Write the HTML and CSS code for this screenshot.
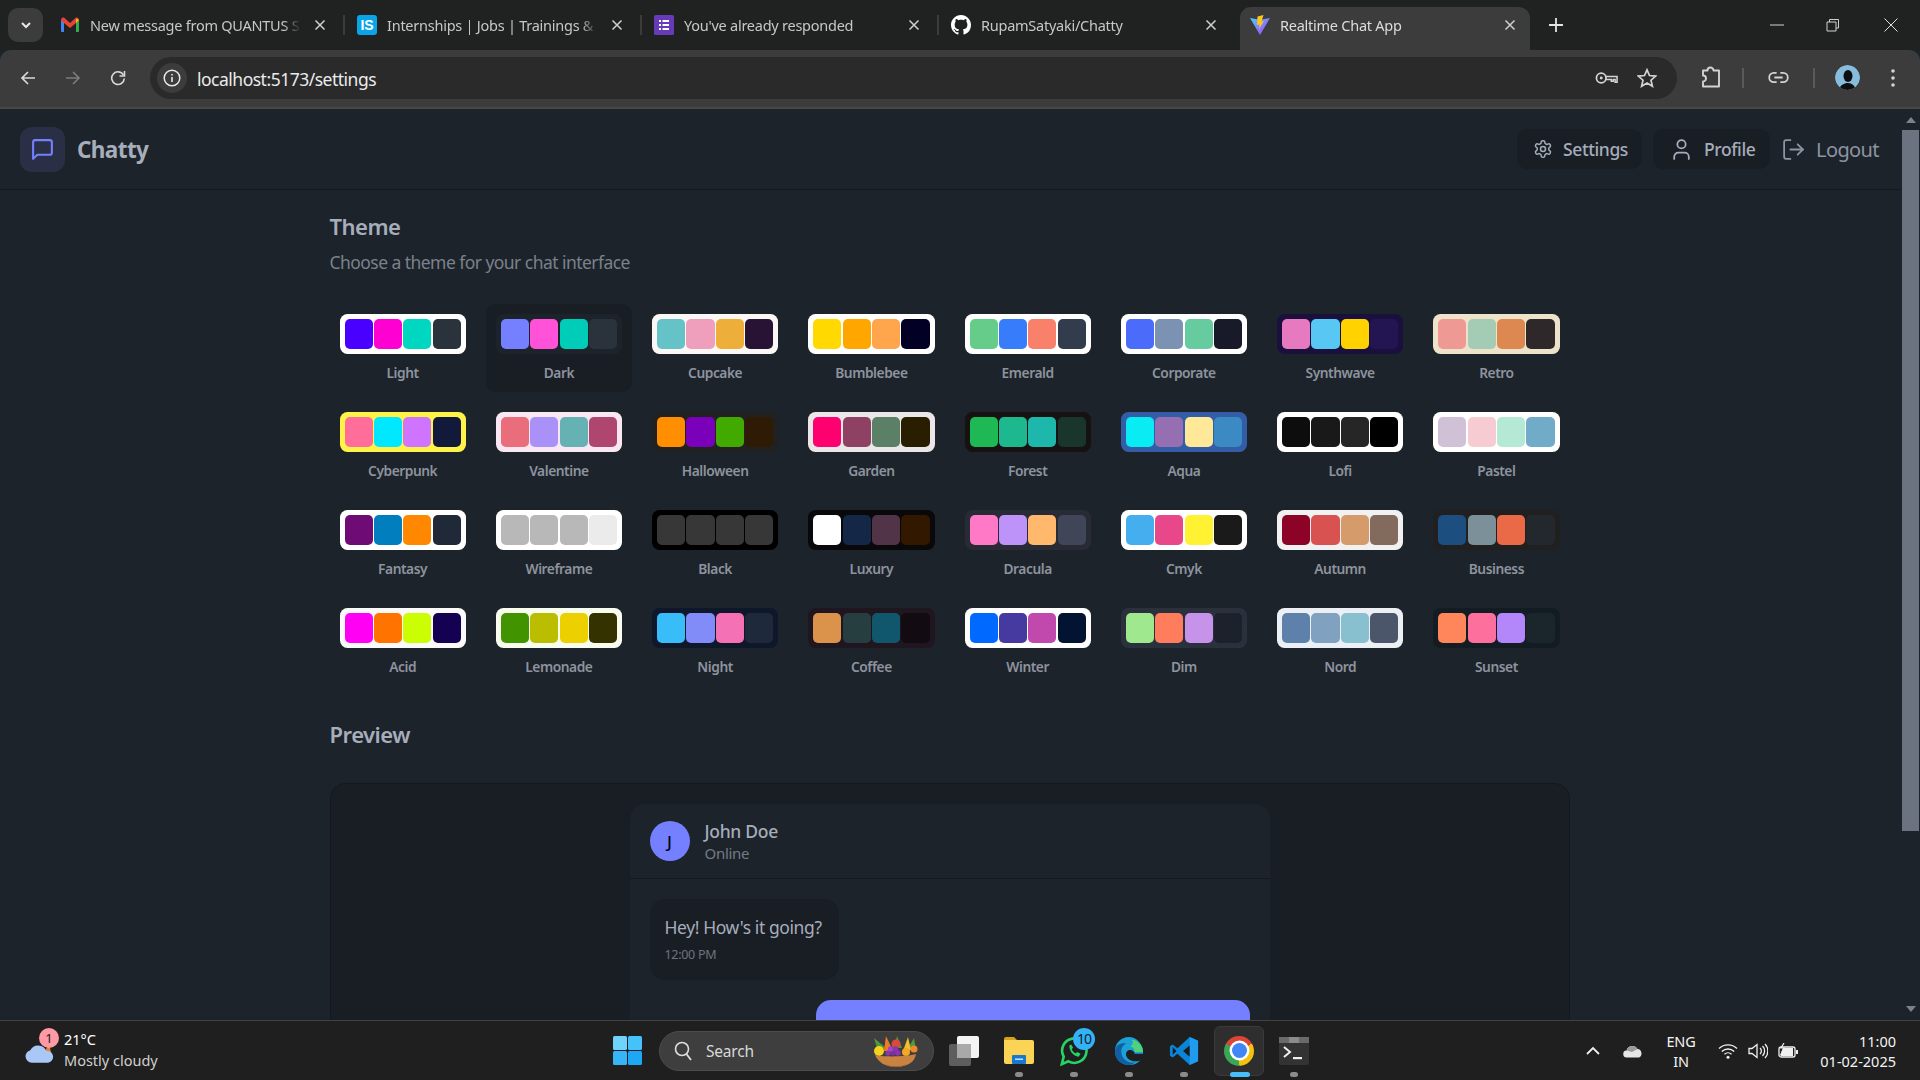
FILE: index.html
```html
<!DOCTYPE html>
<html lang="en">
<head>
<meta charset="utf-8">
<title>Realtime Chat App</title>
<link rel="stylesheet" href="styles.css">
</head>
<body>
<div class="window">
  <header class="tabstrip">
    <button class="tabsearch"><svg class="i12" viewBox="0 0 12 12"><path d="M2 4l4 4 4-4" fill="none" stroke="#e8e8e8" stroke-width="2"/></svg></button>
    <div class="tab first">
      <svg class="fav" viewBox="0 0 20 20"><path d="M1 17V5l3 1v11H2a1 1 0 0 1-1-1z" fill="#4285f4"/><path d="M16 17V6l3-1v11a1 1 0 0 1-1 1z" fill="#34a853"/><path d="M1 5c0-2 2-3 3.500-2L10 8l5.500-5C17 2 19 3 19 5l-3 3-6 5-6-5z" fill="#ea4335"/><path d="M16 3.500l3 1.500-3 3z" fill="#fbbc04"/></svg>
      <span class="tabtitle">New message from QUANTUS S</span>
      <svg class="tabx" viewBox="0 0 12 12"><path d="M1.500 1.500l9 9M10.500 1.500l-9 9"/></svg>
    </div>
    <div class="tab">
      <span class="fav isfav">IS</span>
      <span class="tabtitle">Internships | Jobs | Trainings &amp;</span>
      <svg class="tabx" viewBox="0 0 12 12"><path d="M1.500 1.500l9 9M10.500 1.500l-9 9"/></svg>
    </div>
    <div class="tab">
      <svg class="fav" viewBox="0 0 20 20"><rect width="20" height="20" rx="1.500" fill="#673ab7"/><path d="M5 5h2v2H5zM8.500 5H15v2H8.500zM5 9h2v2H5zM8.500 9H15v2H8.500zM5 13h2v2H5zM8.500 13H15v2H8.500z" fill="#fff"/></svg>
      <span class="tabtitle">You've already responded</span>
      <svg class="tabx" viewBox="0 0 12 12"><path d="M1.500 1.500l9 9M10.500 1.500l-9 9"/></svg>
    </div>
    <div class="tab last">
      <svg class="fav" viewBox="0 0 16 16"><path fill="#fff" d="M8 0C3.580 0 0 3.580 0 8c0 3.540 2.290 6.530 5.470 7.590.4.070.55-.17.55-.38 0-.19-.01-.82-.01-1.490-2.010.37-2.530-.49-2.690-.94-.09-.23-.48-.94-.82-1.130-.28-.15-.68-.52-.01-.53.63-.01 1.080.58 1.230.82.72 1.210 1.870.87 2.330.66.07-.52.28-.87.51-1.070-1.780-.2-3.640-.89-3.640-3.950 0-.87.31-1.590.82-2.150-.08-.2-.36-1.020.08-2.120 0 0 .67-.21 2.200.82.64-.18 1.320-.27 2-.27.68 0 1.360.09 2 .27 1.530-1.040 2.200-.82 2.200-.82.44 1.100.16 1.920.08 2.120.51.56.82 1.270.82 2.150 0 3.070-1.870 3.750-3.650 3.950.29.25.54.73.54 1.480 0 1.070-.01 1.930-.01 2.200 0 .21.15.46.55.38A8.013 8.013 0 0 0 16 8c0-4.420-3.580-8-8-8z"/></svg>
      <span class="tabtitle">RupamSatyaki/Chatty</span>
      <svg class="tabx" viewBox="0 0 12 12"><path d="M1.500 1.500l9 9M10.500 1.500l-9 9"/></svg>
    </div>
    <div class="tab active">
      <svg class="fav" viewBox="0 0 20 20"><defs><linearGradient id="vg" x1="0" y1="0" x2="1" y2="1"><stop offset="0" stop-color="#41d1ff"/><stop offset="1" stop-color="#bd34fe"/></linearGradient></defs><path d="M0 3l10 1.800L20 3 10 20z" fill="url(#vg)"/><path d="M13.500 0L7.500 1.500 7 10l2.500-.5-.5 4.500 5-8-2.500.5z" fill="#ffc517"/></svg>
      <span class="tabtitle">Realtime Chat App</span>
      <svg class="tabx" viewBox="0 0 12 12"><path d="M1.500 1.500l9 9M10.500 1.500l-9 9"/></svg>
    </div>
    <svg class="newtab" viewBox="0 0 14 14"><path d="M7 0v14M0 7h14" stroke="#e3e3e3" stroke-width="1.800" fill="none"/></svg>
    <div class="winctl">
      <svg viewBox="0 0 14 14"><path d="M0 7h14" stroke="#d0d0d0" stroke-width="1" fill="none"/></svg>
      <svg viewBox="0 0 14 14"><path d="M1 4h9v9H1zM3.500 4V1.500h9V10H10" stroke="#d0d0d0" stroke-width="1" fill="none"/></svg>
      <svg class="winclose" viewBox="0 0 14 14"><path d="M.5.500l13 13M13.500.500l-13 13" stroke="#e0e0e0" stroke-width="1" fill="none"/></svg>
    </div>
  </header>

  <nav class="toolbar">
    <span class="navbtn"><svg viewBox="0 0 16 16"><path d="M15 8H2M8 2L2 8l6 6" fill="none" stroke="#d8d8d8" stroke-width="1.700"/></svg></span>
    <span class="navbtn"><svg viewBox="0 0 16 16"><path d="M1 8h13M8 2l6 6-6 6" fill="none" stroke="#7b7b7b" stroke-width="1.700"/></svg></span>
    <span class="navbtn"><svg viewBox="0 0 16 16"><path d="M13.500 5A6.300 6.300 0 1 0 14.300 8.500" fill="none" stroke="#d8d8d8" stroke-width="1.600"/><path d="M14.500 1v5h-5" fill="none" stroke="#d8d8d8" stroke-width="1.600"/></svg></span>
    <div class="omnibox">
      <span class="infochip"><svg viewBox="0 0 18 18"><circle cx="9" cy="9" r="7.800" fill="none" stroke="#e8e8e8" stroke-width="1.500"/><path d="M8.200 8h1.600v5H8.200zM8.200 5h1.600v1.600H8.200z" fill="#e8e8e8"/></svg></span>
      <span class="url">localhost:5173/settings</span>
      <svg class="keyicon" viewBox="0 0 24 14"><circle cx="6.500" cy="7" r="5" fill="none" stroke="#d4d4d4" stroke-width="1.800"/><circle cx="6.500" cy="7" r="1.500" fill="#d4d4d4"/><path d="M11.500 5.500H23v6h-2V8.500h-2v2h-2v-2h-5.500" fill="none" stroke="#d4d4d4" stroke-width="1.600"/></svg>
      <svg class="staricon" viewBox="0 0 20 20"><path d="M10 1.800l2.500 5.700 6.200.6-4.700 4.100 1.400 6.100L10 15.100l-5.400 3.200L6 12.200 1.300 8.100l6.200-.6z" fill="none" stroke="#d4d4d4" stroke-width="1.700"/></svg>
    </div>
    <svg class="puzzle" viewBox="0 0 20 24"><path d="M2 4.500h4.500a3 3 0 0 1 6 0H18v16H2v-5a3 3 0 0 0 0-6z" fill="none" stroke="#d4d4d4" stroke-width="1.900" stroke-linejoin="round"/></svg>
    <span class="tbsep"></span>
    <svg class="linkicon" viewBox="0 0 22 14"><path d="M9 2H6a5 5 0 0 0 0 10h3M13 2h3a5 5 0 0 1 0 10h-3M6.500 7h9" fill="none" stroke="#d4d4d4" stroke-width="1.900"/></svg>
    <span class="tbsep sep2"></span>
    <svg class="avatar" viewBox="0 0 25 25"><clipPath id="ac"><circle cx="12.500" cy="12.500" r="12.500"/></clipPath><g clip-path="url(#ac)"><rect width="25" height="25" fill="#86bcdc"/><ellipse cx="13" cy="11" rx="4.500" ry="6" fill="#0c0e10"/><path d="M4 25c1-5 5-7 9-7s7 3 8 7z" fill="#0c0e10"/></g></svg>
    <svg class="dots" viewBox="0 0 4 18"><circle cx="2" cy="2" r="1.800"/><circle cx="2" cy="9" r="1.800"/><circle cx="2" cy="16" r="1.800"/></svg>
  </nav>

  <div class="viewport">
    <div class="page">
      <div class="navbar">
        <div class="brand">
          <span class="logo"><svg viewBox="0 0 24 24"><path d="M21 15a2 2 0 0 1-2 2H7l-4 4V5a2 2 0 0 1 2-2h14a2 2 0 0 1 2 2z"/></svg></span>
          <span class="brandname">Chatty</span>
        </div>
        <div class="navlinks">
          <a class="navbox settingsbox"><svg class="lu s20" viewBox="0 0 24 24"><path d="M12.220 2h-.44a2 2 0 0 0-2 2v.18a2 2 0 0 1-1 1.730l-.43.25a2 2 0 0 1-2 0l-.15-.08a2 2 0 0 0-2.730.73l-.22.38a2 2 0 0 0 .73 2.730l.15.1a2 2 0 0 1 1 1.720v.51a2 2 0 0 1-1 1.740l-.15.09a2 2 0 0 0-.73 2.730l.22.38a2 2 0 0 0 2.730.73l.15-.08a2 2 0 0 1 2 0l.43.25a2 2 0 0 1 1 1.730V20a2 2 0 0 0 2 2h.44a2 2 0 0 0 2-2v-.18a2 2 0 0 1 1-1.730l.43-.25a2 2 0 0 1 2 0l.15.08a2 2 0 0 0 2.730-.73l.22-.39a2 2 0 0 0-.73-2.730l-.15-.08a2 2 0 0 1-1-1.740v-.5a2 2 0 0 1 1-1.740l.15-.09a2 2 0 0 0 .73-2.730l-.22-.38a2 2 0 0 0-2.730-.73l-.15.08a2 2 0 0 1-2 0l-.43-.25a2 2 0 0 1-1-1.730V4a2 2 0 0 0-2-2z"/><circle cx="12" cy="12" r="3"/></svg><span>Settings</span></a>
          <a class="navbox profilebox"><svg class="lu s25" viewBox="0 0 24 24"><path d="M19 21v-2a4 4 0 0 0-4-4H9a4 4 0 0 0-4 4v2"/><circle cx="12" cy="7" r="4"/></svg><span>Profile</span></a>
          <a class="logout"><svg class="lu s25" viewBox="0 0 24 24"><path d="M9 21H5a2 2 0 0 1-2-2V5a2 2 0 0 1 2-2h4"/><polyline points="16 17 21 12 16 7"/><line x1="21" y1="12" x2="9" y2="12"/></svg><span>Logout</span></a>
        </div>
      </div>

      <main class="container">
        <h2 class="heading">Theme</h2>
        <p class="subtitle">Choose a theme for your chat interface</p>
        <div class="themes">
          <div class="theme"><div class="sw" style="background:#ffffff"><i style="background:#4a00ff"></i><i style="background:#ff00d3"></i><i style="background:#00d7c0"></i><i style="background:#2a323c"></i></div><span>Light</span></div>
          <div class="theme selected"><div class="sw" style="background:#1d232a"><i style="background:#7480ff"></i><i style="background:#ff52d9"></i><i style="background:#00cdb7"></i><i style="background:#2a323c"></i></div><span>Dark</span></div>
          <div class="theme"><div class="sw" style="background:#faf7f5"><i style="background:#65c3c8"></i><i style="background:#ef9fbc"></i><i style="background:#eeaf3a"></i><i style="background:#291334"></i></div><span>Cupcake</span></div>
          <div class="theme"><div class="sw" style="background:#ffffff"><i style="background:#ffd900"></i><i style="background:#ffa600"></i><i style="background:#ffa64d"></i><i style="background:#020024"></i></div><span>Bumblebee</span></div>
          <div class="theme"><div class="sw" style="background:#ffffff"><i style="background:#66cc8a"></i><i style="background:#377cfb"></i><i style="background:#f9806a"></i><i style="background:#333c4d"></i></div><span>Emerald</span></div>
          <div class="theme"><div class="sw" style="background:#ffffff"><i style="background:#4b6bfb"></i><i style="background:#7b92b2"></i><i style="background:#67cba0"></i><i style="background:#181a2a"></i></div><span>Corporate</span></div>
          <div class="theme"><div class="sw" style="background:#1a103d"><i style="background:#e779c1"></i><i style="background:#58c7f3"></i><i style="background:#ffd200"></i><i style="background:#221551"></i></div><span>Synthwave</span></div>
          <div class="theme"><div class="sw" style="background:#ece3ca"><i style="background:#ef9995"></i><i style="background:#a4cbb4"></i><i style="background:#dc8850"></i><i style="background:#2e282a"></i></div><span>Retro</span></div>

          <div class="theme"><div class="sw" style="background:#fff248"><i style="background:#ff6e9b"></i><i style="background:#00e8ff"></i><i style="background:#ce74ff"></i><i style="background:#111a3b"></i></div><span>Cyberpunk</span></div>
          <div class="theme"><div class="sw" style="background:#fae7f4"><i style="background:#e96d7b"></i><i style="background:#a991f7"></i><i style="background:#66b1b3"></i><i style="background:#af4670"></i></div><span>Valentine</span></div>
          <div class="theme"><div class="sw" style="background:#212121"><i style="background:#ff8f00"></i><i style="background:#7a00ba"></i><i style="background:#42a900"></i><i style="background:#2f1b05"></i></div><span>Halloween</span></div>
          <div class="theme"><div class="sw" style="background:#e9e7e7"><i style="background:#ff0070"></i><i style="background:#8e4162"></i><i style="background:#5c7f67"></i><i style="background:#291e00"></i></div><span>Garden</span></div>
          <div class="theme"><div class="sw" style="background:#171212"><i style="background:#1eb854"></i><i style="background:#1db88e"></i><i style="background:#1db8ab"></i><i style="background:#19362d"></i></div><span>Forest</span></div>
          <div class="theme"><div class="sw" style="background:#345da7"><i style="background:#09ecf3"></i><i style="background:#966fb3"></i><i style="background:#ffe999"></i><i style="background:#3b8ac4"></i></div><span>Aqua</span></div>
          <div class="theme"><div class="sw" style="background:#ffffff"><i style="background:#0d0d0d"></i><i style="background:#1a1919"></i><i style="background:#262626"></i><i style="background:#000000"></i></div><span>Lofi</span></div>
          <div class="theme"><div class="sw" style="background:#ffffff"><i style="background:#d1c1d7"></i><i style="background:#f6cbd1"></i><i style="background:#b4e9d6"></i><i style="background:#70acc7"></i></div><span>Pastel</span></div>

          <div class="theme"><div class="sw" style="background:#ffffff"><i style="background:#6e0b75"></i><i style="background:#007ebd"></i><i style="background:#ff8800"></i><i style="background:#1f2937"></i></div><span>Fantasy</span></div>
          <div class="theme"><div class="sw" style="background:#ffffff"><i style="background:#b8b8b8"></i><i style="background:#b8b8b8"></i><i style="background:#b8b8b8"></i><i style="background:#ebebeb"></i></div><span>Wireframe</span></div>
          <div class="theme"><div class="sw" style="background:#000000"><i style="background:#373737"></i><i style="background:#373737"></i><i style="background:#373737"></i><i style="background:#373737"></i></div><span>Black</span></div>
          <div class="theme"><div class="sw" style="background:#09090b"><i style="background:#ffffff"></i><i style="background:#152747"></i><i style="background:#513448"></i><i style="background:#331800"></i></div><span>Luxury</span></div>
          <div class="theme"><div class="sw" style="background:#282a36"><i style="background:#ff79c6"></i><i style="background:#bd93f9"></i><i style="background:#ffb86c"></i><i style="background:#414558"></i></div><span>Dracula</span></div>
          <div class="theme"><div class="sw" style="background:#ffffff"><i style="background:#45aeee"></i><i style="background:#e8488a"></i><i style="background:#fff232"></i><i style="background:#1a1a1a"></i></div><span>Cmyk</span></div>
          <div class="theme"><div class="sw" style="background:#f1f1f1"><i style="background:#8c0327"></i><i style="background:#d85251"></i><i style="background:#d59b6a"></i><i style="background:#826a5c"></i></div><span>Autumn</span></div>
          <div class="theme"><div class="sw" style="background:#202020"><i style="background:#1c4e80"></i><i style="background:#7c909a"></i><i style="background:#ea6947"></i><i style="background:#23282e"></i></div><span>Business</span></div>

          <div class="theme"><div class="sw" style="background:#fafafa"><i style="background:#ff00f4"></i><i style="background:#ff7400"></i><i style="background:#cbfd03"></i><i style="background:#140152"></i></div><span>Acid</span></div>
          <div class="theme"><div class="sw" style="background:#f8fdef"><i style="background:#419400"></i><i style="background:#bbbd00"></i><i style="background:#edd000"></i><i style="background:#343300"></i></div><span>Lemonade</span></div>
          <div class="theme"><div class="sw" style="background:#0f172a"><i style="background:#38bdf8"></i><i style="background:#818cf8"></i><i style="background:#f471b5"></i><i style="background:#1e293b"></i></div><span>Night</span></div>
          <div class="theme"><div class="sw" style="background:#20161f"><i style="background:#db924b"></i><i style="background:#263e3f"></i><i style="background:#10576d"></i><i style="background:#120c12"></i></div><span>Coffee</span></div>
          <div class="theme"><div class="sw" style="background:#ffffff"><i style="background:#0069ff"></i><i style="background:#463aa1"></i><i style="background:#c148ac"></i><i style="background:#021431"></i></div><span>Winter</span></div>
          <div class="theme"><div class="sw" style="background:#2a303c"><i style="background:#9fe88d"></i><i style="background:#ff7d5c"></i><i style="background:#c792e9"></i><i style="background:#1c212b"></i></div><span>Dim</span></div>
          <div class="theme"><div class="sw" style="background:#eceff4"><i style="background:#5e81ac"></i><i style="background:#81a1c1"></i><i style="background:#88c0d0"></i><i style="background:#4c566a"></i></div><span>Nord</span></div>
          <div class="theme"><div class="sw" style="background:#121c22"><i style="background:#ff865b"></i><i style="background:#fd6f9c"></i><i style="background:#b387fa"></i><i style="background:#1b262c"></i></div><span>Sunset</span></div>
        </div>

        <h2 class="heading previewhead">Preview</h2>
        <section class="previewcard">
          <div class="chatcard">
            <div class="chathead">
              <span class="chatav">J</span>
              <div class="chatwho"><div class="chatname">John Doe</div><div class="chatstatus">Online</div></div>
            </div>
            <div class="chatbody">
              <div class="bubble in"><p>Hey! How's it going?</p><small>12:00 PM</small></div>
              <div class="bubble out"></div>
            </div>
          </div>
        </section>
      </main>
    </div>
    <aside class="scrollbar">
      <span class="arrow up"></span>
      <span class="thumb"></span>
      <span class="arrow down"></span>
    </aside>
  </div>

  <footer class="taskbar">
    <div class="weather">
      <span class="wicon">
        <svg viewBox="0 0 32 22"><path d="M26 2l-6 9h8z" fill="#e8842c"/><path d="M8 21a6.500 6.500 0 0 1-1.500-12.800A9 9 0 0 1 23 9a6 6 0 0 1 2 12z" fill="#a9c8f5"/></svg>
        <b class="wbadge">1</b>
      </span>
      <div class="wtext"><div class="wtemp">21°C</div><div class="wdesc">Mostly cloudy</div></div>
    </div>
    <div class="tasks">
      <svg class="winlogo" viewBox="0 0 29 29"><rect width="14" height="14" rx="1.500" fill="#6fd3fb"/><rect x="15" width="14" height="14" rx="1.500" fill="#45c2fa"/><rect y="15" width="14" height="14" rx="1.500" fill="#36b6f8"/><rect x="15" y="15" width="14" height="14" rx="1.500" fill="#1ea7f5"/></svg>
      <div class="searchbox">
        <svg class="mag" viewBox="0 0 18 20"><circle cx="8" cy="8" r="6.500" fill="none" stroke="#e0e0e0" stroke-width="1.600"/><path d="M12.500 13l4.500 6" stroke="#e0e0e0" stroke-width="1.800"/></svg>
        <span>Search</span>
        <svg class="basket" viewBox="0 0 50 32"><path d="M4 3l12 10-8 3zM27 1l5 12-8 0zM44 3l2 12-9 0z" fill="#4f9a3a"/><path d="M16 1l7 15h-9z" fill="#ee7d22"/><path d="M38 2l3 13-8 1z" fill="#eec02e"/><circle cx="9" cy="16" r="5" fill="#f6d21f"/><circle cx="26" cy="9" r="4.500" fill="#d94a3a"/><circle cx="36" cy="17" r="4" fill="#f5a623"/><circle cx="44" cy="14" r="3.500" fill="#ef8a2c"/><circle cx="18" cy="18" r="2.700" fill="#8a35ac"/><circle cx="23" cy="18" r="2.700" fill="#7c2f9c"/><circle cx="28" cy="18" r="2.700" fill="#8a35ac"/><circle cx="20.500" cy="14" r="2.700" fill="#a045c4"/><circle cx="25.500" cy="14" r="2.700" fill="#8a35ac"/><path d="M5 20c5 2 33 2 41-1-1 8-9 13-20 13S8 27 5 20z" fill="#c9823f"/><path d="M14 29c6 3 17 3 23 0-5 4-18 4-23 0z" fill="#9c5f2b"/></svg>
      </div>
      <span class="task"><svg viewBox="0 0 30 30"><rect y="8" width="22" height="22" rx="2" fill="#5e5e5e"/><rect x="8" width="22" height="22" rx="2" fill="#f4f4f4"/><rect x="8" y="8" width="14" height="14" fill="#a9a9a9"/></svg></span>
      <span class="task dot"><svg viewBox="0 0 30 30"><path d="M0 3a2 2 0 0 1 2-2h8l3 3h-13z" fill="#d6a21a"/><path d="M0 4h28a2 2 0 0 1 2 2v20a2 2 0 0 1-2 2H2a2 2 0 0 1-2-2z" fill="#fcd455"/><rect x="8" y="19" width="14" height="9" rx="1" fill="#1877cf"/><rect x="11" y="22.500" width="8" height="1.500" fill="#bfe2ff"/></svg></span>
      <span class="task dot"><svg viewBox="0 0 30 32"><path d="M2 30l2-8A13 13 0 1 1 9 27z" fill="none" stroke="#25d366" stroke-width="2.800"/><path d="M10 10c0 6 4 11 10 12l2-3-3.500-2-1.500 1.500c-2-1-3.500-2.500-4.500-4.500L14 12.500 12 9z" fill="#25d366"/></svg><b class="wabadge">10</b></span>
      <span class="task dot"><svg viewBox="0 0 30 32"><path d="M15 1C6 1 0 8 0 16c0 9 7 15 15 15 5 0 9-2 12-5-5 2-13 1-15-5-1-4 2-6 4-6 3 0 5 2 5 4h9c1-10-7-18-15-18z" fill="#1ba0d8"/><path d="M0 16C1 9 7 7 12 8c-4 2-6 6-5 11 1 6 8 11 15 9-3 2-5 3-8 3C7 31 0 25 0 16z" fill="#115ea3"/><path d="M18 4c6 0 12 6 12 13h-9c0-2-1-5-5-6 3-1 4-4 2-7z" fill="#4fd27a"/></svg></span>
      <span class="task dot"><svg viewBox="0 0 30 32"><path d="M21 1l9 4v22l-9 4L8 19l-5 4-3-2v-10l3-2 5 4z" fill="#0a84d6"/><path d="M21 1l9 4v22l-9 4z" fill="#1f9cf0"/><path d="M21 10l-7 6 7 6z" fill="#1b1b1b"/><path d="M3 12l4 4-4 4z" fill="#1b1b1b"/></svg></span>
      <span class="task activetask"><span class="chrome"><span></span></span></span>
      <span class="task dot"><svg viewBox="0 0 30 30"><rect y="1" width="30" height="28" rx="2" fill="#333"/><rect y="1" width="30" height="6" fill="#6a6a6a"/><rect x="10" y="1" width="10" height="6" fill="#8b8b8b"/><path d="M5 11l6 5-6 5" fill="none" stroke="#f0f0f0" stroke-width="2"/><rect x="14" y="21" width="9" height="2.200" fill="#f0f0f0"/></svg></span>
    </div>
    <div class="tray">
      <svg class="t-chev" viewBox="0 0 14 9"><path d="M1 8l6-6 6 6" fill="none" stroke="#f0f0f0" stroke-width="1.800"/></svg>
      <svg class="t-cloud" viewBox="0 0 20 14"><path d="M4 13.500a3.500 3.500 0 0 1-.5-7A6 6 0 0 1 14.500 5 4.500 4.500 0 0 1 16 13.500z" fill="#e6e6e6"/><path d="M3.500 6.500A6 6 0 0 1 14.500 5L9 8z" fill="#9a9a9a"/></svg>
      <div class="t-lang"><div>ENG</div><div>IN</div></div>
      <svg class="t-wifi" viewBox="0 0 20 16"><path d="M1 5.500a13 13 0 0 1 18 0M3.800 8.500a9 9 0 0 1 12.400 0M6.500 11.300a5 5 0 0 1 7 0" fill="none" stroke="#f0f0f0" stroke-width="1.400"/><circle cx="10" cy="14.300" r="1.500" fill="#f0f0f0"/></svg>
      <svg class="t-vol" viewBox="0 0 20 16"><path d="M1 5.500h3L9 1.500v13l-5-4H1z" fill="none" stroke="#f0f0f0" stroke-width="1.300"/><path d="M12 5a4 4 0 0 1 0 6M14.500 3a7 7 0 0 1 0 10M17 1a10 10 0 0 1 0 14" fill="none" stroke="#f0f0f0" stroke-width="1.300"/></svg>
      <svg class="t-bat" viewBox="0 0 20 16"><rect x="1" y="4" width="16" height="10" rx="2" fill="none" stroke="#f0f0f0" stroke-width="1.300"/><path d="M2 12l3-7h10v8H3z" fill="#f0f0f0"/><rect x="18" y="7" width="2" height="4" fill="#f0f0f0"/><path d="M6 0L3 5h3L4 9" fill="none" stroke="#f0f0f0" stroke-width="1.200"/></svg>
      <div class="t-clock"><div>11:00</div><div>01-02-2025</div></div>
    </div>
  </footer>
</div>
</body>
</html>
```

FILE: styles.css
```css
* { box-sizing: border-box; }
html, body { margin: 0; height: 100%; overflow: hidden; }
body { font-family: "Noto Sans", "Open Sans", sans-serif; background: #1d232a; }
.window { display: flex; flex-direction: column; width: 1920px; height: 1080px; }

/* tab strip */
.tabstrip { flex: none; height: 50px; display: flex; align-items: flex-end; padding-left: 8px; background: #202221; }
.tabsearch { flex: none; width: 35px; height: 34px; margin-bottom: 8px; border: 0; border-radius: 10px; background: #3c3c3c; display: flex; align-items: center; justify-content: center; padding: 0; }
.i12 { width: 12px; height: 12px; }
.tab { flex: none; width: 297px; height: 43px; display: flex; align-items: center; padding: 0 10px 8px 12px; position: relative; color: #c7c7c7; font-size: 14.5px; }
.tab::after { content: ""; position: absolute; right: 0; top: 8px; height: 20px; width: 2px; background: #3b3b3b; }
.tab.first { margin-left: 5px; }
.tab.last::after { display: none; }
.tab.active { width: 290px; margin-left: 4px; padding: 0 5px 8px 10px; background: #3c3c3c; border-radius: 11px 11px 0 0; color: #dcdcdc; }
.tab.active::after { display: none; }
.fav { flex: none; width: 20px; height: 20px; }
.isfav { background: #0aa5e8; color: #fff; border-radius: 3px; font: 700 14px/20px "Liberation Sans", sans-serif; text-align: center; }
.tabtitle { flex: 1; min-width: 0; margin-left: 10px; white-space: nowrap; overflow: hidden; letter-spacing: -0.25px; -webkit-mask-image: linear-gradient(90deg, #000 90%, transparent 98%); mask-image: linear-gradient(90deg, #000 90%, transparent 98%); }
.tabx { flex: none; width: 12px; height: 12px; margin: 0 9px; fill: none; stroke: #d0d0d0; stroke-width: 1.500; }
.newtab { flex: none; width: 14px; height: 14px; margin: 0 0 18px 19px; }
.winctl { margin-left: auto; display: flex; gap: 42px; padding: 0 22px 18px 0; }
.winctl svg { width: 14px; height: 14px; }
.winctl .winclose { margin-left: 2px; }

/* toolbar */
.toolbar { flex: none; height: 59px; display: flex; align-items: center; padding: 0 0 2px 5px; background: #3c3c3c; border-bottom: 2px solid #474747; border-radius: 11px 11px 0 0; }
.navbtn { flex: none; width: 45px; display: flex; justify-content: center; }
.navbtn svg { width: 16px; height: 16px; }
.omnibox { flex: none; width: 1527px; height: 42px; margin-left: 10px; padding: 0 20px 0 7px; border-radius: 21px; background: #2a2a2a; display: flex; align-items: center; }
.infochip { flex: none; width: 30px; height: 30px; border-radius: 50%; background: #3c3c3c; display: flex; align-items: center; justify-content: center; }
.infochip svg { width: 18px; height: 18px; }
.url { margin: 2px 0 0 10px; flex: 1; color: #ebebeb; font-size: 17.5px; letter-spacing: -0.5px; }
.keyicon { flex: none; width: 23px; height: 14px; }
.staricon { flex: none; width: 20px; height: 20px; margin-left: 19px; }
.puzzle { flex: none; width: 20px; height: 24px; margin-left: 24px; }
.tbsep { flex: none; width: 2px; height: 20px; margin-left: 21px; background: #5a5a5a; }
.linkicon { flex: none; width: 21px; height: 13px; margin-left: 24px; }
.sep2 { margin-left: 24px; }
.avatar { flex: none; width: 25px; height: 25px; margin-left: 20px; border-radius: 50%; }
.dots { flex: none; width: 4px; height: 18px; margin-left: 31px; fill: #d4d4d4; }

/* viewport */
.viewport { flex: 1; min-height: 0; display: flex; overflow: hidden; background: #1d232a; }
.page { flex: 1; min-width: 0; }
.scrollbar { flex: none; width: 19px; display: flex; flex-direction: column; align-items: center; padding-top: 8px; height: 911px; }
.arrow { width: 0; height: 0; border-left: 5px solid transparent; border-right: 5px solid transparent; }
.arrow.up { border-bottom: 6px solid #7b828d; }
.arrow.down { border-top: 6px solid #7b828d; margin-top: auto; margin-bottom: 8px; }
.thumb { width: 17px; height: 701px; margin-top: 7px; background: #6b7280; }

/* navbar */
.navbar { height: 81px; display: flex; align-items: center; justify-content: space-between; padding: 0 22px 0 20px; border-bottom: 1px solid #15191e; }
.brand { display: flex; align-items: center; gap: 12px; }
.logo { width: 45px; height: 45px; border-radius: 12px; background: #292f45; display: flex; align-items: center; justify-content: center; }
.logo svg { width: 25px; height: 25px; fill: none; stroke: #7480ff; stroke-width: 2; stroke-linecap: round; stroke-linejoin: round; }
.brandname { font-size: 22.5px; font-weight: 700; color: #a6adbb; letter-spacing: -0.6px; }
.navlinks { display: flex; align-items: center; }
.navbox { display: flex; align-items: center; height: 40px; border-radius: 10px; background: #191e24; color: #a6adbb; font-size: 17.5px; font-weight: 500; letter-spacing: -0.4px; }
.settingsbox { width: 125px; padding-left: 16px; gap: 10px; }
.profilebox { width: 117px; margin-left: 11px; padding-left: 16px; gap: 10px; }
.lu { flex: none; fill: none; stroke: currentColor; stroke-width: 2; stroke-linecap: round; stroke-linejoin: round; }
.s20 { width: 20px; height: 20px; stroke-width: 1.800; }
.s25 { width: 25px; height: 25px; stroke-width: 1.700; }
.logout { display: flex; align-items: center; gap: 10px; margin-left: 11px; color: #8d94a3; font-size: 20px; letter-spacing: -0.6px; }

/* settings */
.container { width: 1240px; margin-left: 329.5px; padding-top: 19px; }
.heading { margin: 0; color: #a6adbb; font-size: 22px; font-weight: 600; line-height: 35px; letter-spacing: -0.5px; }
.subtitle { margin: 6px 0 29px; color: #7b818b; font-size: 17.500px; line-height: 25px; letter-spacing: -0.55px; }
.themes { display: grid; grid-template-columns: repeat(8, 1fr); gap: 10px; }
.theme { display: flex; flex-direction: column; align-items: center; gap: 8.500px; padding: 10px; border-radius: 10px; color: #8d939f; font-size: 13.750px; font-weight: 600; line-height: 19.500px; letter-spacing: -0.45px; }
.theme.selected { background: #191e24; }
.sw { width: 100%; height: 40px; padding: 5px; border-radius: 7.500px; display: grid; grid-template-columns: repeat(4, 1fr); gap: 1.250px; }
.sw i { display: block; border-radius: 5px; }
.previewhead { margin-top: 31px; }
.previewcard { margin-top: 31px; height: 400px; padding: 20px; border: 1px solid #15191e; border-radius: 15px; background: #191e24; }
.chatcard { width: 640px; margin: 0 auto; height: 380px; border-radius: 15px; background: #1d232a; }
.chathead { height: 75px; display: flex; align-items: center; gap: 15px; padding: 0 20px; border-bottom: 1px solid #15191e; }
.chatav { flex: none; width: 40px; height: 40px; border-radius: 50%; background: #7480ff; color: #060716; font-size: 17px; font-weight: 500; display: flex; align-items: center; justify-content: center; }
.chatname { color: #a6adbb; font-size: 17.500px; font-weight: 500; line-height: 25px; letter-spacing: -0.3px; }
.chatstatus { color: #757b85; font-size: 15px; line-height: 19px; letter-spacing: -0.3px; }
.chatbody { display: flex; flex-direction: column; align-items: flex-start; padding: 20px; gap: 20px; }
.bubble { border-radius: 15px; padding: 16px 15px 0; }
.bubble p { margin: 0; font-size: 17.500px; line-height: 25px; letter-spacing: -0.4px; }
.bubble small { display: block; margin-top: 6px; font-size: 12.500px; line-height: 18px; letter-spacing: -0.3px; color: #6e747e; }
.bubble.in { background: #191e24; color: #a6adbb; height: 81px; width: 189px; }
.bubble.out { align-self: flex-end; background: #7480ff; height: 90px; width: 434px; }

/* taskbar */
.taskbar { flex: none; height: 60px; display: flex; align-items: center; background: #1f1f1f; border-top: 1px solid #414141; color: #fff; }
.weather { flex: none; width: 613px; padding-left: 24px; display: flex; align-items: center; gap: 9px; }
.wicon { width: 31px; height: 22px; margin-top: 5px; position: relative; flex: none; }
.wicon svg { display: block; width: 31px; height: 22px; }
.wbadge { position: absolute; left: 15px; top: -14px; width: 20px; height: 20px; border-radius: 50%; background: #ff99a4; color: #1a1a1a; font-size: 13px; font-weight: 400; line-height: 20px; text-align: center; }
.wtext { margin-top: -2px; font-size: 14.500px; line-height: 20.500px; }
.wdesc { color: #cfcfcf; }
.tasks { flex: none; display: flex; align-items: center; }
.winlogo { flex: none; width: 29px; height: 29px; }
.searchbox { flex: none; width: 275px; height: 40px; margin: 0 5px 0 17px; padding-left: 14px; border-radius: 20px; background: #3e3e3e; border: 1px solid #4c4c4c; display: flex; align-items: center; color: #d8d8d8; font-size: 15.500px; letter-spacing: -0.2px; }
.mag { flex: none; width: 18px; height: 20px; margin-right: 14px; }
.basket { flex: none; width: 50px; height: 32px; margin-left: auto; margin-right: 13px; }
.task { flex: none; width: 50px; height: 50px; margin-right: 5px; display: flex; align-items: center; justify-content: center; position: relative; border-radius: 6px; }
.task svg { width: 30px; height: 30px; }
.dot::after { content: ""; position: absolute; left: 21px; bottom: -1px; width: 8px; height: 5px; border-radius: 2.500px; background: #8b8b8b; }
.wabadge { position: absolute; left: 24px; top: 2px; width: 22px; height: 22px; border-radius: 50%; background: #33b2f5; color: #102030; font-size: 14px; font-weight: 400; line-height: 22px; text-align: center; letter-spacing: -1px; }
.activetask { background: #2e2e2e; border: 1px solid #3a3a3a; }
.activetask::after { content: ""; position: absolute; left: 15px; bottom: -2px; width: 20px; height: 5px; border-radius: 2.500px; background: #49bdf8; }
.chrome { width: 30px; height: 30px; border-radius: 50%; background: conic-gradient(from -62deg, #db4437 0 122deg, #f4c20d 122deg 240deg, #3aa757 240deg 360deg); display: flex; align-items: center; justify-content: center; }
.chrome span { width: 15px; height: 15px; border-radius: 50%; background: #4285f4; box-shadow: 0 0 0 2.500px #fff; }
.tray { flex: 1; display: flex; align-items: center; color: #f4f4f4; font-size: 14.500px; }
.t-chev { flex: none; width: 14px; height: 9px; margin-left: 262px; }
.t-cloud { flex: none; width: 20px; height: 14px; margin-left: 23px; }
.t-lang { flex: none; width: 34px; margin-left: 21px; text-align: center; line-height: 20px; letter-spacing: -0.2px; }
.t-wifi { flex: none; width: 20px; height: 16px; margin-left: 20px; }
.t-vol { flex: none; width: 20px; height: 16px; margin-left: 10px; }
.t-bat { flex: none; width: 20px; height: 16px; margin-left: 10px; }
.t-clock { flex: none; width: 98px; text-align: right; line-height: 20px; }
```
